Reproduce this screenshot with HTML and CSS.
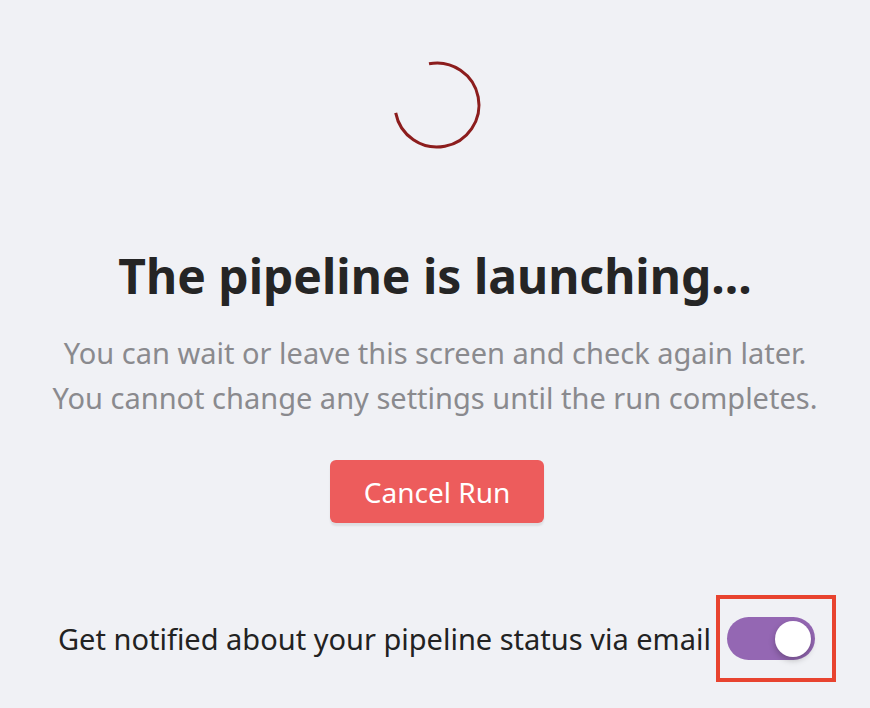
FILE: index.html
```html
<!DOCTYPE html>
<html>
  <head>
    <meta charset="UTF-8" />
    <meta name="viewport" content="width=device-width, initial-scale=1.0" />
    <title>Pipeline launching</title>
    <link rel="stylesheet" href="styles.css">
  </head>
  <body>
    <section class="launch">
      <div class="spinner">
        <svg width="90" height="90" viewBox="0 0 90 90">
          <path d="M37 3.8 A42 42 0 1 1 3.7 52.9" fill="none" stroke="#8c1d1d" stroke-width="3" />
        </svg>
      </div>
      <h1>The pipeline is launching...</h1>
      <p class="description">
        You can wait or leave this screen and check again later.<br />
        You cannot change any settings until the run completes.
      </p>
      <button class="cancel">Cancel Run</button>
    </section>

    <section class="notify">
      <span>Get notified about your pipeline status via email</span>
      <div class="highlight">
        <div class="toggle"><div class="knob"></div></div>
      </div>
    </section>
  </body>
</html>
```

FILE: styles.css
```css
* {
  margin: 0;
  box-sizing: border-box;
  font-family: "Noto Sans", sans-serif;
}

body {
  background: #f0f1f5;
  color: #222;
}

.launch {
  display: flex;
  flex-direction: column;
  align-items: center;
  padding-top: 60px;
}

.spinner {
  width: 90px;
  height: 90px;
  margin-left: 4px;
}

.spinner svg {
  overflow: visible;
}

h1 {
  margin-top: 96px;
  font-size: 48px;
  font-weight: 700;
  color: #252525;
  line-height: 60px;
}

.description {
  margin-top: 24px;
  text-align: center;
  font-size: 29px;
  line-height: 45px;
  color: #8a8a8e;
}

.cancel {
  margin-top: 40px;
  margin-left: 4px;
  width: 214px;
  height: 63px;
  border: none;
  border-radius: 6px;
  background: #ed5c5c;
  color: #fff;
  font-size: 28px;
  box-shadow: 0 3px 2px rgba(0, 0, 0, 0.08);
  cursor: pointer;
}

.notify {
  display: flex;
  align-items: center;
  margin-top: 72px;
  padding-left: 58px;
  font-size: 29px;
  color: #222;
}

.highlight {
  margin-left: 5px;
  width: 120px;
  height: 87px;
  border: 4px solid #e8432f;
  display: flex;
  align-items: center;
  padding-left: 7px;
}

.toggle {
  width: 88px;
  height: 43px;
  border-radius: 22px;
  background: #9467b3;
  position: relative;
}

.knob {
  position: absolute;
  top: 4px;
  right: 4px;
  width: 36px;
  height: 36px;
  border-radius: 50%;
  background: #fff;
  box-shadow: 0 3px 6px rgba(0, 0, 0, 0.25);
}
```
